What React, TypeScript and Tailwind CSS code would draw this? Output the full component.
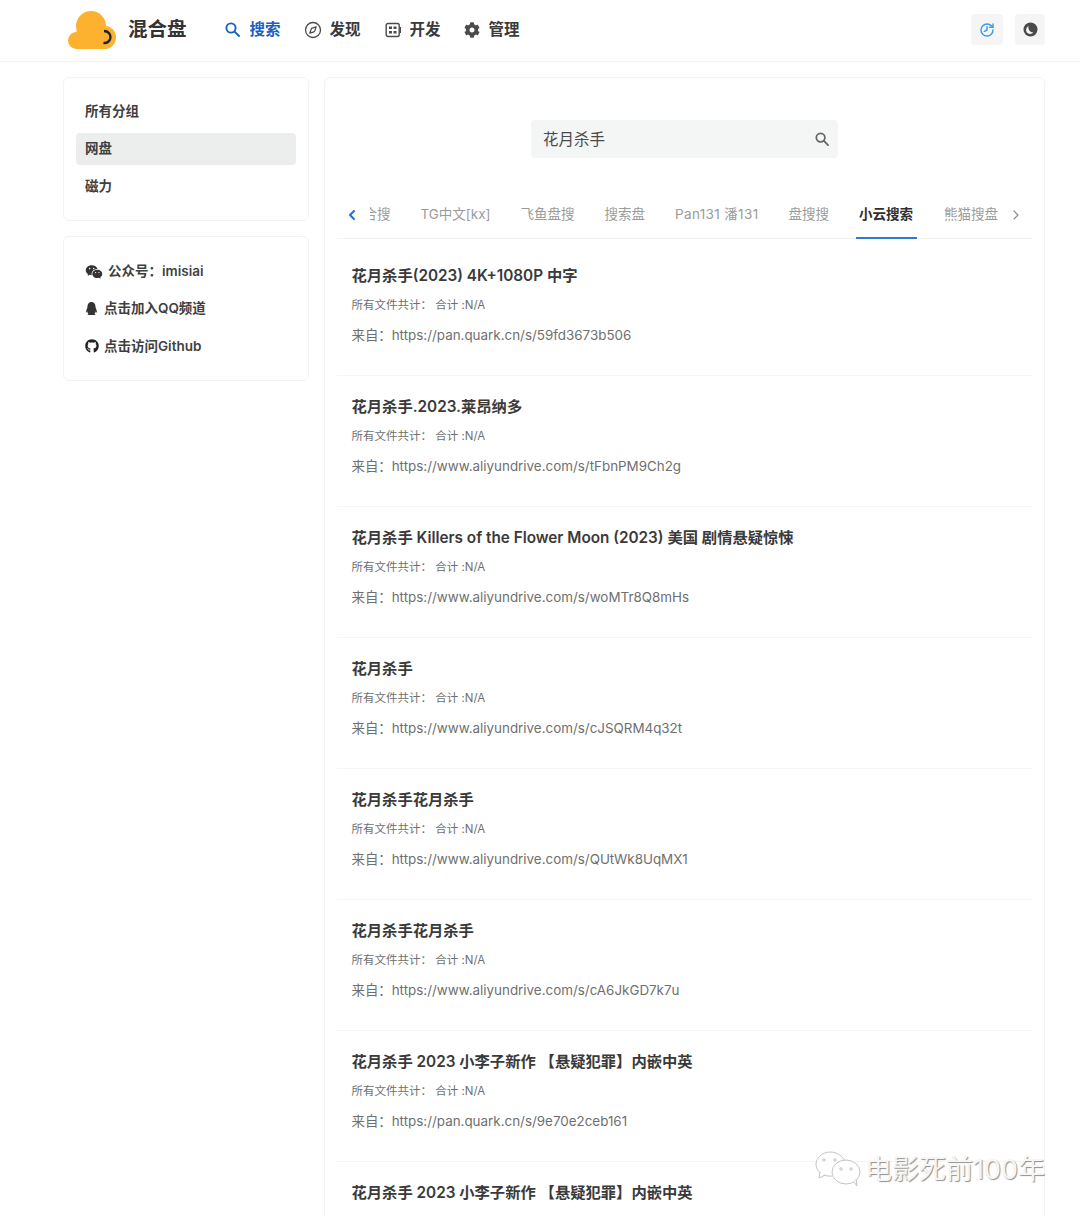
import React from "react";
import { Compass, History, ChevronLeft, ChevronRight } from "lucide-react";
import { FaGithub, FaQq, FaCog } from "react-icons/fa";
import { RiWechatFill } from "react-icons/ri";

const font = "font-['Inter','Noto_Sans_CJK_SC',sans-serif]";

const items = [
  ["花月杀手(2023) 4K+1080P 中字", "https://pan.quark.cn/s/59fd3673b506"],
  ["花月杀手.2023.莱昂纳多", "https://www.aliyundrive.com/s/tFbnPM9Ch2g"],
  ["花月杀手 Killers of the Flower Moon (2023) 美国 剧情悬疑惊悚", "https://www.aliyundrive.com/s/woMTr8Q8mHs"],
  ["花月杀手", "https://www.aliyundrive.com/s/cJSQRM4q32t"],
  ["花月杀手花月杀手", "https://www.aliyundrive.com/s/QUtWk8UqMX1"],
  ["花月杀手花月杀手", "https://www.aliyundrive.com/s/cA6JkGD7k7u"],
  ["花月杀手 2023 小李子新作 【悬疑犯罪】内嵌中英", "https://pan.quark.cn/s/9e70e2ceb161"],
  ["花月杀手 2023 小李子新作 【悬疑犯罪】内嵌中英", "https://pan.quark.cn/s/9e70e2ceb161"],
];

function Logo() {
  return (
    <svg width="48" height="38" viewBox="0 0 48 38" className="shrink-0">
      <g fill="#FDB22F">
        <circle cx="23" cy="15" r="15" />
        <circle cx="36.500" cy="26.500" r="11.500" />
        <circle cx="8.500" cy="29.500" r="8.500" />
        <rect x="8.500" y="20" width="28" height="18" />
      </g>
      <path d="M36 20C40 20 42.500 23 42.500 26C42.500 29.500 39.500 32.500 35.500 32" fill="none" stroke="#222" strokeWidth="2.400" />
    </svg>
  );
}

function SearchGlyph({ size, className }: { size: number; className?: string }) {
  return (
    <svg width={size} height={size} viewBox="0 0 15 15" fill="none" stroke="currentColor" strokeWidth="1.900" strokeLinecap="round" className={`shrink-0 ${className ?? ""}`}>
      <circle cx="6" cy="6" r="4.600" />
      <path d="M9.600 9.600L14 14" />
    </svg>
  );
}

function DevIcon() {
  return (
    <svg width="16" height="16" viewBox="0 0 16 16" fill="none" className="text-[#4b4b4b]">
      <rect x="1.200" y="1.500" width="13" height="13" rx="1.800" stroke="currentColor" strokeWidth="1.400" />
      <rect x="4" y="4.500" width="3" height="2.500" fill="currentColor" />
      <rect x="8.500" y="4.500" width="3" height="2.500" fill="currentColor" />
      <rect x="4" y="9" width="3" height="2.500" fill="currentColor" />
      <rect x="8.500" y="9" width="3" height="2.500" fill="currentColor" />
      <path d="M15.500 5V11" stroke="currentColor" strokeWidth="1" />
    </svg>
  );
}

function MoonIcon() {
  return (
    <svg width="15" height="15" viewBox="0 0 15 15">
      <circle cx="7.500" cy="7.500" r="7" fill="#4a4a4a" />
      <path d="M5.500 4A4.600 4.600 0 0 0 3.800 10.500A4.600 4.600 0 0 0 10.500 10.500A5 5 0 0 1 5.500 4Z" fill="#f5f5f5" />
    </svg>
  );
}

function NavItem({ icon, label, active, className }: { icon: React.ReactNode; label: string; active?: boolean; className?: string }) {
  return (
    <div className={`flex items-center gap-[9px] text-[15.5px] font-semibold ${active ? "text-[#1d5fc0]" : "text-[#3a3a3a]"} ${className ?? ""}`}>
      <span className="flex w-[16px] justify-center">{icon}</span>
      <span>{label}</span>
    </div>
  );
}

function WechatOutline() {
  return (
    <svg width="46" height="36" viewBox="0 0 46 36" fill="none" stroke="#c4c4c4" strokeWidth="1">
      <path d="M17 25C9 26 1 21 1 13.500C1 6.500 8 1 15 1C22 1 28 5 30 11" fill="#fff" />
      <path d="M5 21L4 27L10 24" fill="#fff" />
      <ellipse cx="31" cy="21" rx="14" ry="12" fill="#fff" />
      <path d="M39 31L42 35L41 28" fill="#fff" />
      <circle cx="9" cy="9" r="1.200" />
      <circle cx="20" cy="9" r="1.200" />
      <circle cx="26" cy="18" r="1.200" />
      <circle cx="36" cy="18" r="1.200" />
    </svg>
  );
}

export default function App() {
  return (
    <div className={`relative h-[1216px] w-[1080px] overflow-hidden bg-white ${font}`}>
      <header className="flex h-[62px] items-center justify-between border-b border-[#f3f3f3] pb-[2px] pl-[68px] pr-[35px]">
        <div className="flex items-center">
          <Logo />
          <span className="ml-[12px] text-[19.5px] font-semibold text-[#333]">混合盘</span>
          <nav className="ml-[38px] flex items-center gap-[24px]">
            <NavItem active label="搜索" icon={<SearchGlyph size={15} />} />
            <NavItem label="发现" icon={<Compass size={18} strokeWidth={1.7} className="shrink-0 text-[#4b4b4b]" />} />
            <NavItem label="开发" icon={<DevIcon />} />
            <NavItem label="管理" className="-ml-[1px]" icon={<FaCog size={16} className="text-[#4b4b4b]" />} />
          </nav>
        </div>
        <div className="flex items-center gap-[12px]">
          <div className="flex h-[31px] w-[32px] items-center justify-center rounded bg-[#f5f5f5]">
            <History size={16} strokeWidth={2.2} className="-scale-x-100 text-[#3b9bf0]" />
          </div>
          <div className="flex h-[31px] w-[30px] items-center justify-center rounded bg-[#f5f5f5]">
            <MoonIcon />
          </div>
        </div>
      </header>

      <div className="flex gap-[15px] pl-[63px] pr-[35px] pt-[15px]">
        <aside className="flex w-[246px] shrink-0 flex-col gap-[15px]">
          <div className="flex h-[144px] flex-col justify-center rounded-md border border-[#f3f3f3] px-[12px] text-[13.5px] font-semibold text-[#3f3f3f]">
            <div className="flex h-[32px] items-center px-[9px]">所有分组</div>
            <div className="my-[6px] flex h-[32px] items-center rounded bg-[#eceded] px-[9px] pb-[2px]">网盘</div>
            <div className="flex h-[32px] items-center px-[9px] pb-[2px]">磁力</div>
          </div>
          <div className="flex h-[145px] flex-col justify-center gap-[15px] rounded-md border border-[#f3f3f3] px-[21px] text-[13.5px] font-semibold text-[#3f3f3f]">
            <div className="flex h-[22px] items-center gap-[5px]">
              <RiWechatFill size={18} className="text-[#333]" />
              <span>公众号：imisiai</span>
            </div>
            <div className="flex h-[22px] items-center gap-[6px]">
              <FaQq size={13} className="text-[#333]" />
              <span>点击加入QQ频道</span>
            </div>
            <div className="flex h-[22px] items-center gap-[5px] pt-[1px]">
              <FaGithub size={14} className="text-[#222]" />
              <span>点击访问Github</span>
            </div>
          </div>
        </aside>

        <main className="h-[1200px] w-[721px] rounded-md border border-[#f3f3f3] px-[12px]">
          <div className="flex justify-center pt-[42px]">
            <div className="flex h-[38px] w-[307px] items-center justify-between rounded bg-[#f4f5f5] pl-[12px] pr-[9px]">
              <span className="pt-[2px] text-[15.5px] text-[#4a4a4a]">花月杀手</span>
              <SearchGlyph size={14} className="text-[#666]" />
            </div>
          </div>

          <div className="mt-[41px] flex h-[40px] items-center border-b border-[#f3f3f3]">
            <ChevronLeft size={16} strokeWidth={3} className="ml-[7px] mb-[8px] shrink-0 text-[#1d6fd8]" />
            <div className="ml-[10px] flex h-[40px] w-[628px] justify-end gap-[30px] overflow-hidden text-[13.5px] text-[#9b9b9b]">
              <div className="flex shrink-0 items-center pb-[8px]">聚合搜</div>
              <div className="flex shrink-0 items-center pb-[8px]">TG中文[kx]</div>
              <div className="flex shrink-0 items-center pb-[8px]">飞鱼盘搜</div>
              <div className="flex shrink-0 items-center pb-[8px]">搜索盘</div>
              <div className="flex shrink-0 items-center pb-[8px] tracking-[0.36px]">Pan131 潘131</div>
              <div className="flex shrink-0 items-center pb-[8px]">盘搜搜</div>
              <div className="relative flex shrink-0 items-center pb-[8px] font-semibold text-[#2f2f2f]">
                小云搜索
                <div className="absolute -left-[3px] -right-[4px] bottom-0 h-[2px] bg-[#2f7bd0]" />
              </div>
              <div className="ml-[1px] flex shrink-0 items-center pb-[8px]">熊猫搜盘</div>
            </div>
            <ChevronRight size={16} strokeWidth={1.6} className="ml-[10px] mb-[8px] shrink-0 text-[#888]" />
          </div>

          <div className="mt-[6px]">
            {items.map(([title, url], i) => (
              <div key={i} className="h-[131px] border-b border-[#f5f5f5] pl-[14.5px] pt-[19px]">
                <div className="h-[24px] text-[15.3px] leading-[24px] font-semibold text-[#3a3a3a]">{title}</div>
                <div className="mt-[8px] h-[18px] text-[11.5px] leading-[18px] text-[#6f6f6f]">所有文件共计：&nbsp;合计 :N/A</div>
                <div className="mt-[10px] h-[22px] text-[13.4px] leading-[22px] text-[#6f6f6f]">来自：{url}</div>
              </div>
            ))}
          </div>
        </main>
      </div>

      <div className="absolute left-[815px] top-[1151px] flex items-center gap-[4px]">
        <WechatOutline />
        <span className="text-[27px] leading-none text-[#f6f6f6] [text-shadow:1px_1px_1px_#909090]">电影死前100年</span>
      </div>
    </div>
  );
}
